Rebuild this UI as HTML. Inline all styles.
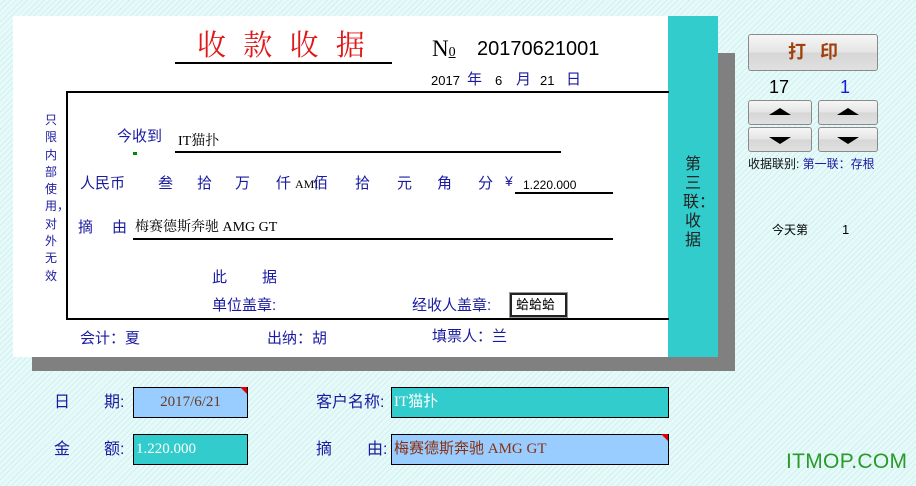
<!DOCTYPE html>
<html><head><meta charset="utf-8"><style>
*{margin:0;padding:0;box-sizing:border-box}
body{width:916px;height:486px;overflow:hidden;position:relative;
background:repeating-linear-gradient(135deg,#e6fafa 0 3px,#d2f0f0 3px 4px);
font-family:"Liberation Sans","Noto Sans CJK SC",sans-serif;}
.a{position:absolute;white-space:nowrap;line-height:1}
.b{color:#1a1aa0}
.s{font-family:"Liberation Serif","Noto Serif CJK SC","Noto Sans CJK SC",serif}
.btn{position:absolute;border:1px solid #8a8a8a;border-radius:3px;background:linear-gradient(#f6f6f6,#e4e4e4 50%,#d6d6d6 51%,#e0e0e0)}
.up,.dn{position:absolute;left:50%;margin-left:-11px;width:0;height:0;border-left:11px solid transparent;border-right:11px solid transparent}
.up{top:7px;border-bottom:7px solid #000}
.dn{top:9px;border-top:7px solid #000}
.box{position:absolute;border:1.5px solid #000;height:31px;font-size:15px;line-height:28px;font-family:"Liberation Serif","Noto Sans CJK SC",serif}
</style></head><body>
<div class="a" style="left:32px;top:357px;width:703px;height:14px;background:#808080"></div>
<div class="a" style="left:718px;top:53px;width:17px;height:318px;background:#808080"></div>
<div class="a" style="left:13px;top:16px;width:655px;height:341px;background:#fff"></div>
<div class="a" style="left:668px;top:16px;width:50px;height:341px;background:#33cccc"></div>

<div class="a s" style="left:197px;top:32px;font-size:29px;color:#e01818;letter-spacing:5px">收 款 收 据</div>
<div class="a" style="left:175px;top:62px;width:217px;height:2px;background:#000"></div>
<div class="a s" style="left:432px;top:37px;font-size:23px">N<span style="font-size:14px;text-decoration:underline">0</span></div>
<div class="a" style="left:477px;top:39px;font-size:20px">20170621001</div>
<div class="a" style="left:431px;top:74px;font-size:13px">2017</div>
<div class="a b" style="left:467px;top:72px;font-size:15px">年</div>
<div class="a" style="left:495px;top:74px;font-size:13px">6</div>
<div class="a b" style="left:516px;top:72px;font-size:15px">月</div>
<div class="a" style="left:540px;top:74px;font-size:13px">21</div>
<div class="a b" style="left:566px;top:72px;font-size:15px">日</div>

<div class="a" style="left:66px;top:91px;width:603px;height:229px;border:2px solid #000;border-right:none"></div>
<div class="a b" style="left:45px;top:112px;font-size:12px;line-height:17.3px;width:14px;white-space:normal">只限内部使用，对外无效</div>

<div class="a b" style="left:117px;top:129px;font-size:15px">今收到</div>
<div class="a" style="left:133px;top:152px;width:4px;height:3px;background:#080"></div>
<div class="a s" style="left:178px;top:135px;font-size:14px">IT猫扑</div>
<div class="a" style="left:175px;top:151px;width:386px;height:2px;background:#000"></div>

<div class="a b" style="left:80px;top:176px;font-size:15px">人民币</div>
<div class="a b" style="left:158px;top:176px;font-size:15px">叁</div>
<div class="a b" style="left:197px;top:176px;font-size:15px">拾</div>
<div class="a b" style="left:235px;top:176px;font-size:15px">万</div>
<div class="a b" style="left:276px;top:176px;font-size:15px">仟</div>
<div class="a s" style="left:295px;top:178px;font-size:12px">AMI</div>
<div class="a b" style="left:313px;top:176px;font-size:15px">佰</div>
<div class="a b" style="left:355px;top:176px;font-size:15px">拾</div>
<div class="a b" style="left:397px;top:176px;font-size:15px">元</div>
<div class="a b" style="left:437px;top:176px;font-size:15px">角</div>
<div class="a b" style="left:478px;top:176px;font-size:15px">分</div>
<div class="a b" style="left:505px;top:174px;font-size:14px">¥</div>
<div class="a" style="left:523px;top:179px;font-size:12px">1.220.000</div>
<div class="a" style="left:515px;top:192px;width:98px;height:2px;background:#000"></div>

<div class="a b" style="left:78px;top:220px;font-size:15px">摘</div>
<div class="a b" style="left:112px;top:220px;font-size:15px">由</div>
<div class="a s" style="left:135px;top:221px;font-size:14px">梅赛德斯奔驰 AMG GT</div>
<div class="a" style="left:133px;top:238px;width:480px;height:2px;background:#000"></div>

<div class="a b" style="left:212px;top:270px;font-size:15px">此</div>
<div class="a b" style="left:262px;top:270px;font-size:15px">据</div>
<div class="a b" style="left:212px;top:298px;font-size:15px">单位盖章:</div>
<div class="a b" style="left:412px;top:298px;font-size:15px">经收人盖章:</div>
<div class="a" style="left:510px;top:293px;width:57px;height:24px;border:2px solid #222;outline:1px solid #999;font-size:13px;line-height:19px;padding-left:4px">蛤蛤蛤</div>

<div class="a b" style="left:80px;top:331px;font-size:15px">会计：夏</div>
<div class="a b" style="left:267px;top:331px;font-size:15px">出纳：胡</div>
<div class="a b" style="left:432px;top:329px;font-size:15px">填票人：兰</div>

<div class="a" style="left:683px;top:155px;font-size:16px;line-height:19px;width:20px;white-space:normal;text-align:center;color:#222">第三联：收据</div>

<div class="btn" style="left:748px;top:34px;width:130px;height:37px;text-align:center;font-size:18px;line-height:35px;color:#a0400a;font-weight:bold;letter-spacing:14px;padding-left:14px">打印</div>
<div class="a" style="left:769px;top:78px;font-size:18px">17</div>
<div class="a" style="left:840px;top:78px;font-size:18px;color:#1a1ad0">1</div>
<div class="btn" style="left:748px;top:100px;width:64px;height:25px"><i class="up"></i></div>
<div class="btn" style="left:748px;top:127px;width:64px;height:25px"><i class="dn"></i></div>
<div class="btn" style="left:818px;top:100px;width:60px;height:25px"><i class="up"></i></div>
<div class="btn" style="left:818px;top:127px;width:60px;height:25px"><i class="dn"></i></div>
<div class="a" style="left:748px;top:158px;font-size:12px;color:#111">收据联别: <span class="b">第一联：存根</span></div>
<div class="a" style="left:772px;top:224px;font-size:12px">今天第</div>
<div class="a" style="left:842px;top:223px;font-size:13px">1</div>

<div class="a b" style="left:54px;top:395px;font-size:16px">日</div>
<div class="a b" style="left:104px;top:395px;font-size:16px">期:</div>
<div class="box" style="left:133px;top:387px;width:115px;background:#99ccff;color:#6a3a20;text-align:center">2017/6/21</div>
<div class="a" style="left:240px;top:387px;width:0;height:0;border-left:7px solid transparent;border-top:7px solid #d00"></div>
<div class="a b" style="left:316px;top:395px;font-size:16px">客户名称:</div>
<div class="box" style="left:391px;top:387px;width:278px;background:#33cccc;color:#fff;padding-left:2px">IT猫扑</div>

<div class="a b" style="left:54px;top:442px;font-size:16px">金</div>
<div class="a b" style="left:104px;top:442px;font-size:16px">额:</div>
<div class="box" style="left:133px;top:434px;width:115px;background:#33cccc;color:#fff;padding-left:2px">1.220.000</div>
<div class="a b" style="left:316px;top:442px;font-size:16px">摘</div>
<div class="a b" style="left:367px;top:442px;font-size:16px">由:</div>
<div class="box" style="left:391px;top:434px;width:278px;background:#99ccff;color:#8a3010;padding-left:2px">梅赛德斯奔驰 AMG GT</div>
<div class="a" style="left:661px;top:434px;width:0;height:0;border-left:7px solid transparent;border-top:7px solid #d00"></div>

<div class="a" style="left:786px;top:451px;font-size:21px;color:#2a9a2a;letter-spacing:0.3px">ITMOP.COM</div>
</body></html>
